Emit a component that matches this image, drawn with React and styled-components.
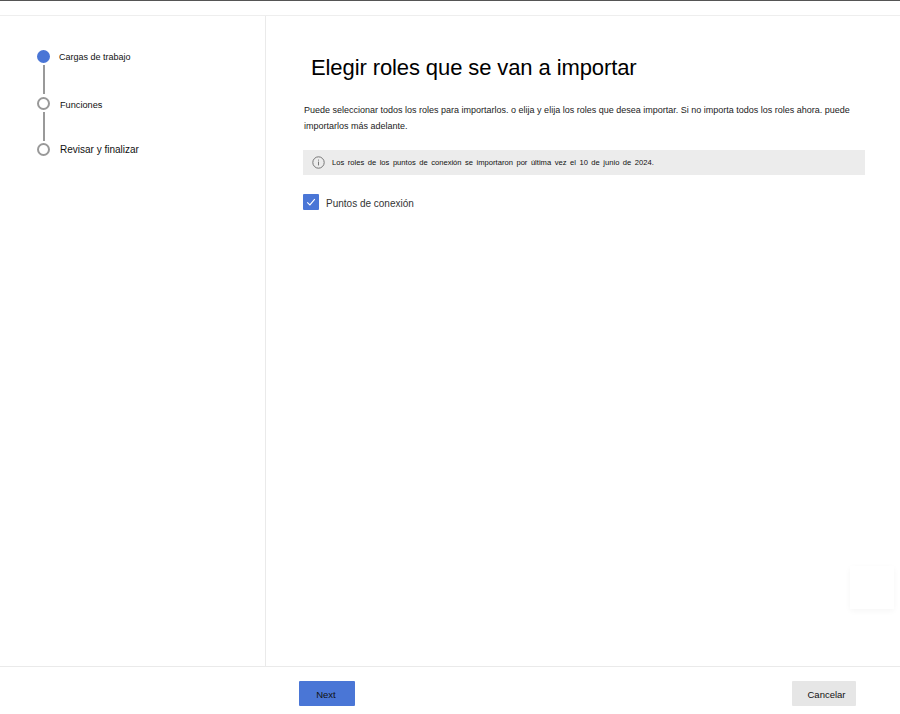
import React from 'react';
import styled, { createGlobalStyle } from 'styled-components';

const GlobalStyle = createGlobalStyle`
  html, body { margin: 0; padding: 0; background: #fff; }
  body { font-family: 'Liberation Sans', Arial, sans-serif; color: #111; }
`;

const Page = styled.div`
  position: relative;
  display: flex;
  flex-direction: column;
  width: 900px;
  height: 714px;
  overflow: hidden;
  border-top: 1px solid #555;
  box-sizing: border-box;
`;

const TopBar = styled.div`
  height: 14px;
  flex: none;
  border-bottom: 1px solid #eee;
`;

const Body = styled.div`
  display: flex;
  flex: 1;
  min-height: 0;
`;

const Sidebar = styled.nav`
  width: 266px;
  flex: none;
  box-sizing: border-box;
  padding: 34px 0 0 37px;
  border-right: 1px solid #eaeaea;
`;

const Step = styled.div`
  display: flex;
  align-items: flex-start;
  height: ${(p) => p.$height}px;
`;

const Track = styled.div`
  display: flex;
  flex-direction: column;
  align-items: center;
  width: 13px;
`;

const Dot = styled.span`
  width: 13px;
  height: 13px;
  box-sizing: border-box;
  border-radius: 50%;
  border: 2px solid ${(p) => (p.$active ? '#4a76d6' : '#999')};
  background: ${(p) => (p.$active ? '#4a76d6' : '#fff')};
`;

const Line = styled.span`
  width: 2px;
  height: 29px;
  margin-top: 2px;
  background: #999;
`;

const StepLabel = styled.span`
  margin-left: ${(p) => (p.$active ? 9 : 10)}px;
  font-size: ${(p) => p.$size}px;
  line-height: 13px;
  margin-top: ${(p) => p.$top}px;
  white-space: nowrap;
`;

const Main = styled.main`
  flex: 1;
  padding: 37px 35px 0 37px;
`;

const Title = styled.h1`
  margin: 0 0 0 8px;
  font-size: 22px;
  font-weight: 400;
  line-height: 30px;
  color: #000;
  letter-spacing: -0.1px;
`;

const Intro = styled.p`
  margin: 19px 0 0 1px;
  font-size: 9px;
  line-height: 16px;
  color: #222;
`;

const Notice = styled.div`
  display: flex;
  align-items: center;
  height: 25px;
  margin-top: 16px;
  padding-left: 9px;
  background: #ececec;
  font-size: 7.6px;
  word-spacing: 1.4px;
  color: #111;
`;

const NoticeIcon = styled.svg`
  width: 13px;
  height: 13px;
  margin-right: 7px;
  flex: none;
`;

const CheckRow = styled.label`
  display: flex;
  align-items: center;
  margin-top: 19px;
  font-size: 10px;
  color: #333;
`;

const CheckBox = styled.span`
  display: flex;
  align-items: center;
  justify-content: center;
  width: 16px;
  height: 16px;
  margin-right: 7px;
  border-radius: 1px;
  background: #4a76d6;
`;

const CheckLabel = styled.span`
  margin-top: 2px;
`;

const Footer = styled.footer`
  display: flex;
  align-items: flex-start;
  justify-content: space-between;
  height: 48px;
  flex: none;
  box-sizing: border-box;
  padding: 14px 44px 0 299px;
  border-top: 1px solid #eaeaea;
`;

const Button = styled.button`
  height: 25px;
  width: ${(p) => p.$width}px;
  padding: 2px ${(p) => (p.$primary ? 2 : 0)}px 0 ${(p) => (p.$primary ? 0 : 5)}px;
  border: 0;
  border-radius: 1px;
  font-family: inherit;
  font-size: 9.5px;
  color: #111;
  background: ${(p) => (p.$primary ? '#4a76d6' : '#e6e6e6')};
`;

const GhostCard = styled.div`
  position: absolute;
  left: 850px;
  top: 565px;
  width: 44px;
  height: 43px;
  background: #fff;
  box-shadow: 0 2px 6px rgba(0, 0, 0, 0.04);
`;

const steps = [
  { label: 'Cargas de trabajo', active: true, line: true, height: 47, top: 1, size: 9 },
  { label: 'Funciones', line: true, height: 46, top: 2, size: 9.2 },
  { label: 'Revisar y finalizar', height: 20, top: 0, size: 10 },
];

export default function App() {
  return (
    <Page>
      <GlobalStyle />
      <TopBar />
      <Body>
        <Sidebar>
          {steps.map((s) => (
            <Step key={s.label} $height={s.height}>
              <Track>
                <Dot $active={s.active} />
                {s.line && <Line />}
              </Track>
              <StepLabel $active={s.active} $top={s.top} $size={s.size}>{s.label}</StepLabel>
            </Step>
          ))}
        </Sidebar>
        <Main>
          <Title>Elegir roles que se van a importar</Title>
          <Intro>
            Puede seleccionar todos los roles para importarlos. o elija y elija los roles que desea importar. Si no importa todos los roles ahora. puede importarlos más adelante.
          </Intro>
          <Notice>
            <NoticeIcon viewBox="0 0 13 13" fill="none">
              <circle cx="6.5" cy="6.5" r="5.7" stroke="#777" strokeWidth="1" />
              <rect x="6" y="5.6" width="1" height="3.8" fill="#777" />
              <rect x="6" y="3.6" width="1" height="1" fill="#777" />
            </NoticeIcon>
            Los roles de los puntos de conexión se importaron por última vez el 10 de junio de 2024.
          </Notice>
          <CheckRow>
            <CheckBox>
              <svg width="10" height="10" viewBox="0 0 10 10" fill="none">
                <path d="M1.2 5.4 L3.9 7.9 L8.8 2.2" stroke="#fff" strokeWidth="1.1" />
              </svg>
            </CheckBox>
            <CheckLabel>Puntos de conexión</CheckLabel>
          </CheckRow>
        </Main>
      </Body>
      <Footer>
        <Button $primary $width={56}>Next</Button>
        <Button $width={64}>Cancelar</Button>
      </Footer>
      <GhostCard />
    </Page>
  );
}
